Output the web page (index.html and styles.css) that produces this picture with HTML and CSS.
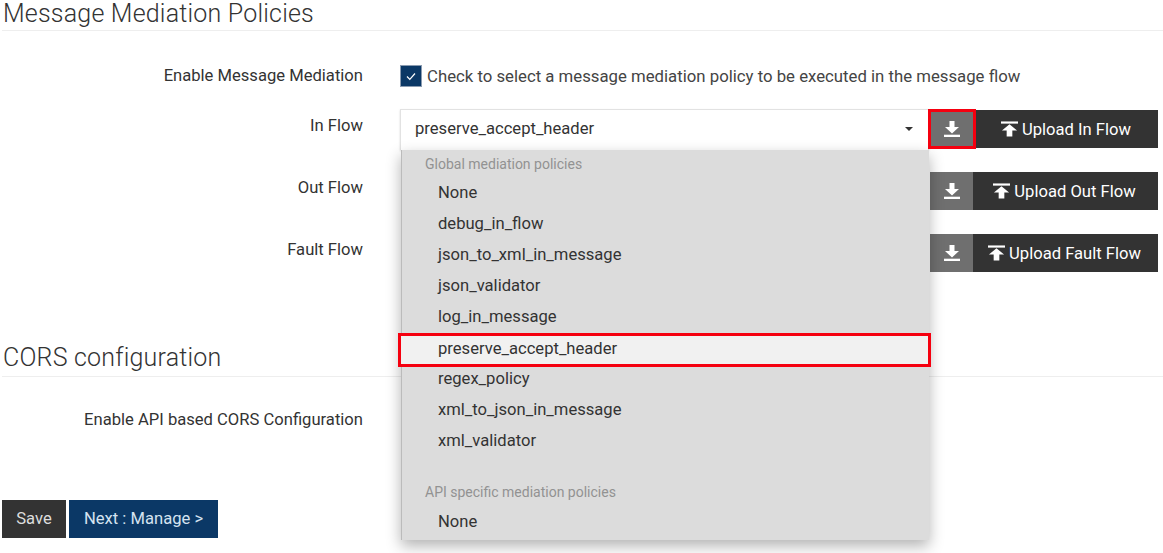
FILE: index.html
```html
<!DOCTYPE html>
<html lang="en">
<head>
  <meta charset="UTF-8">
  <meta name="viewport" content="width=device-width, initial-scale=1.0">
  <title>Message Mediation Policies</title>
  <link rel="stylesheet" href="styles.css">
</head>
<body>

<svg class="icon-defs" width="0" height="0">
  <symbol id="icon-download" viewBox="0 0 16 16">
    <path d="M5.5 0h5v6H15l-7 6.5L1 6h4.500z"/>
    <rect x="0" y="13.700" width="16" height="2.300"/>
  </symbol>
  <symbol id="icon-upload" viewBox="0 0 18 16">
    <rect x="0" y="0" width="18" height="2.300"/>
    <path d="M6 16h6V9.500h5L9 3 1 9.500h5z"/>
  </symbol>
</svg>

<form class="page">
  <h2 class="section-title">Message Mediation Policies</h2>

  <div class="row row-check">
    <label class="row-label">Enable Message Mediation</label>
    <div class="row-control">
      <span class="checkbox">
        <svg viewBox="0 0 12 12" width="12" height="12"><path d="M2 6.500l2.800 2.800L10 3.500" fill="none" stroke="#fff" stroke-width="1.200"/></svg>
      </span>
      <span class="check-text">Check to select a message mediation policy to be executed in the message flow</span>
    </div>
  </div>

  <div class="row row-flow row-in">
    <label class="row-label">In Flow</label>
    <div class="row-control">
      <div class="select-wrap">
        <div class="select-box">
          <span>preserve_accept_header</span>
          <span class="caret"></span>
        </div>
        <div class="dropdown">
          <div class="group-name">Global mediation policies</div>
          <div class="option">None</div>
          <div class="option">debug_in_flow</div>
          <div class="option">json_to_xml_in_message</div>
          <div class="option">json_validator</div>
          <div class="option">log_in_message</div>
          <div class="option option-active">preserve_accept_header</div>
          <div class="option">regex_policy</div>
          <div class="option">xml_to_json_in_message</div>
          <div class="option">xml_validator</div>
          <div class="group-name group-api">API specific mediation policies</div>
          <div class="option">None</div>
        </div>
      </div>
      <button type="button" class="btn-download btn-marked"><svg class="ico-down"><use href="#icon-download"/></svg></button>
      <button type="button" class="btn-upload btn-upload-in"><svg class="ico-up"><use href="#icon-upload"/></svg>Upload In Flow</button>
    </div>
  </div>

  <div class="row row-flow">
    <label class="row-label">Out Flow</label>
    <div class="row-control">
      <div class="select-wrap"></div>
      <button type="button" class="btn-download"><svg class="ico-down"><use href="#icon-download"/></svg></button>
      <button type="button" class="btn-upload"><svg class="ico-up"><use href="#icon-upload"/></svg>Upload Out Flow</button>
    </div>
  </div>

  <div class="row row-flow">
    <label class="row-label">Fault Flow</label>
    <div class="row-control">
      <div class="select-wrap"></div>
      <button type="button" class="btn-download"><svg class="ico-down"><use href="#icon-download"/></svg></button>
      <button type="button" class="btn-upload"><svg class="ico-up"><use href="#icon-upload"/></svg>Upload Fault Flow</button>
    </div>
  </div>

  <h2 class="section-title section-cors">CORS configuration</h2>

  <div class="row row-cors">
    <label class="row-label">Enable API based CORS Configuration</label>
  </div>

  <div class="actions">
    <button type="button" class="btn-save">Save</button>
    <button type="button" class="btn-next">Next : Manage &gt;</button>
  </div>
</form>

</body>
</html>
```

FILE: styles.css
```css
html, body { margin: 0; height: 553px; overflow: hidden; }
body { font-family: Roboto, "Liberation Sans", sans-serif; background-color: #fff; color: #333; font-size: 16.6px; }
.icon-defs { position: absolute; }
.page { display: block; padding: 0 0 0 2px; }

.section-title { font-size: 25px; font-weight: 300; line-height: 28px; height: 30px; margin: 0; padding-left: 1px; color: #333; border-bottom: 1px solid #eee; letter-spacing: 0.2px; box-sizing: content-box; }
.section-cors { margin-top: 46px; height: 35px; line-height: 33px; }

.row { display: flex; }
.row-label { width: 361px; text-align: right; flex: none; line-height: 20px; }
.row-control { display: flex; margin-left: 37px; flex: 1; }

.row-check { margin-top: 33px; height: 45px; }
.row-check .row-label { padding-top: 2px; }
.check-text { color: #444; margin-left: 5px; line-height: 24px; font-size: 16.75px; }
.checkbox { width: 22px; height: 22px; margin-top: 1px; background-color: #0b3866; border: 1px solid #8a9bb0; box-sizing: border-box; display: flex; align-items: center; justify-content: center; }

.row-flow { height: 62px; }
.row-flow .row-label { padding-top: 7px; box-sizing: border-box; }
.select-wrap { position: relative; width: 530px; flex: none; }
.select-box { width: 529px; height: 41px; box-sizing: border-box; padding: 0 15px 3px 14px; display: flex; align-items: center; justify-content: space-between; background-color: #fff; border: 1px solid #e2e2e2; border-bottom: none; box-shadow: 0 1px 2px rgba(0, 0, 0, 0.15); }
.caret { border: 4px solid transparent; border-top-color: #333; border-bottom: none; }

.dropdown { position: absolute; left: 1px; top: 41px; width: 528px; height: 390px; box-sizing: border-box; background-color: #dcdcdc; border-left: 1px solid #bbb; box-shadow: 0 6px 14px rgba(0, 0, 0, 0.3); padding-top: 3px; z-index: 2; }
.group-name { font-size: 14px; color: #929292; padding-left: 23px; height: 24px; line-height: 22px; }
.group-api { margin-top: 26px; line-height: 20px; }
.option { height: 31px; line-height: 31px; padding-left: 36px; color: #333; }
.option-active { box-sizing: border-box; height: 34px; line-height: 25px; margin: 1px -2px -4px -4px; padding-left: 37px; background-color: #f1f1f1; border: 3px solid #f5000f; position: relative; }

button { font-family: inherit; font-size: 16.6px; border: none; color: #fff; cursor: pointer; padding: 0; }
.btn-download { width: 43px; height: 38px; margin: 1px 0 0 0; background-color: #6f6f6f; flex: none; display: flex; align-items: center; justify-content: center; }
.btn-marked { width: 48px; height: 40px; margin: 0 0 0 -2px; border: 3px solid #f5000f; position: relative; z-index: 3; }
.btn-upload { width: 185px; height: 38px; margin-top: 1px; padding-right: 2px; background-color: #333; flex: none; display: flex; align-items: center; justify-content: center; }
.btn-upload-in { width: 182px; }
.ico-down { width: 16px; height: 16px; fill: #fff; }
.ico-up { width: 17px; height: 16px; fill: #fff; margin-right: 4px; }

.row-cors { margin-top: 33px; height: 90px; }

.actions { display: flex; gap: 3px; }
.btn-save { width: 64px; height: 38px; padding-bottom: 2px; background-color: #333; color: #ddd; }
.btn-next { width: 149px; height: 38px; padding-bottom: 2px; background-color: #0b3866; color: #d5e3f0; }
```
